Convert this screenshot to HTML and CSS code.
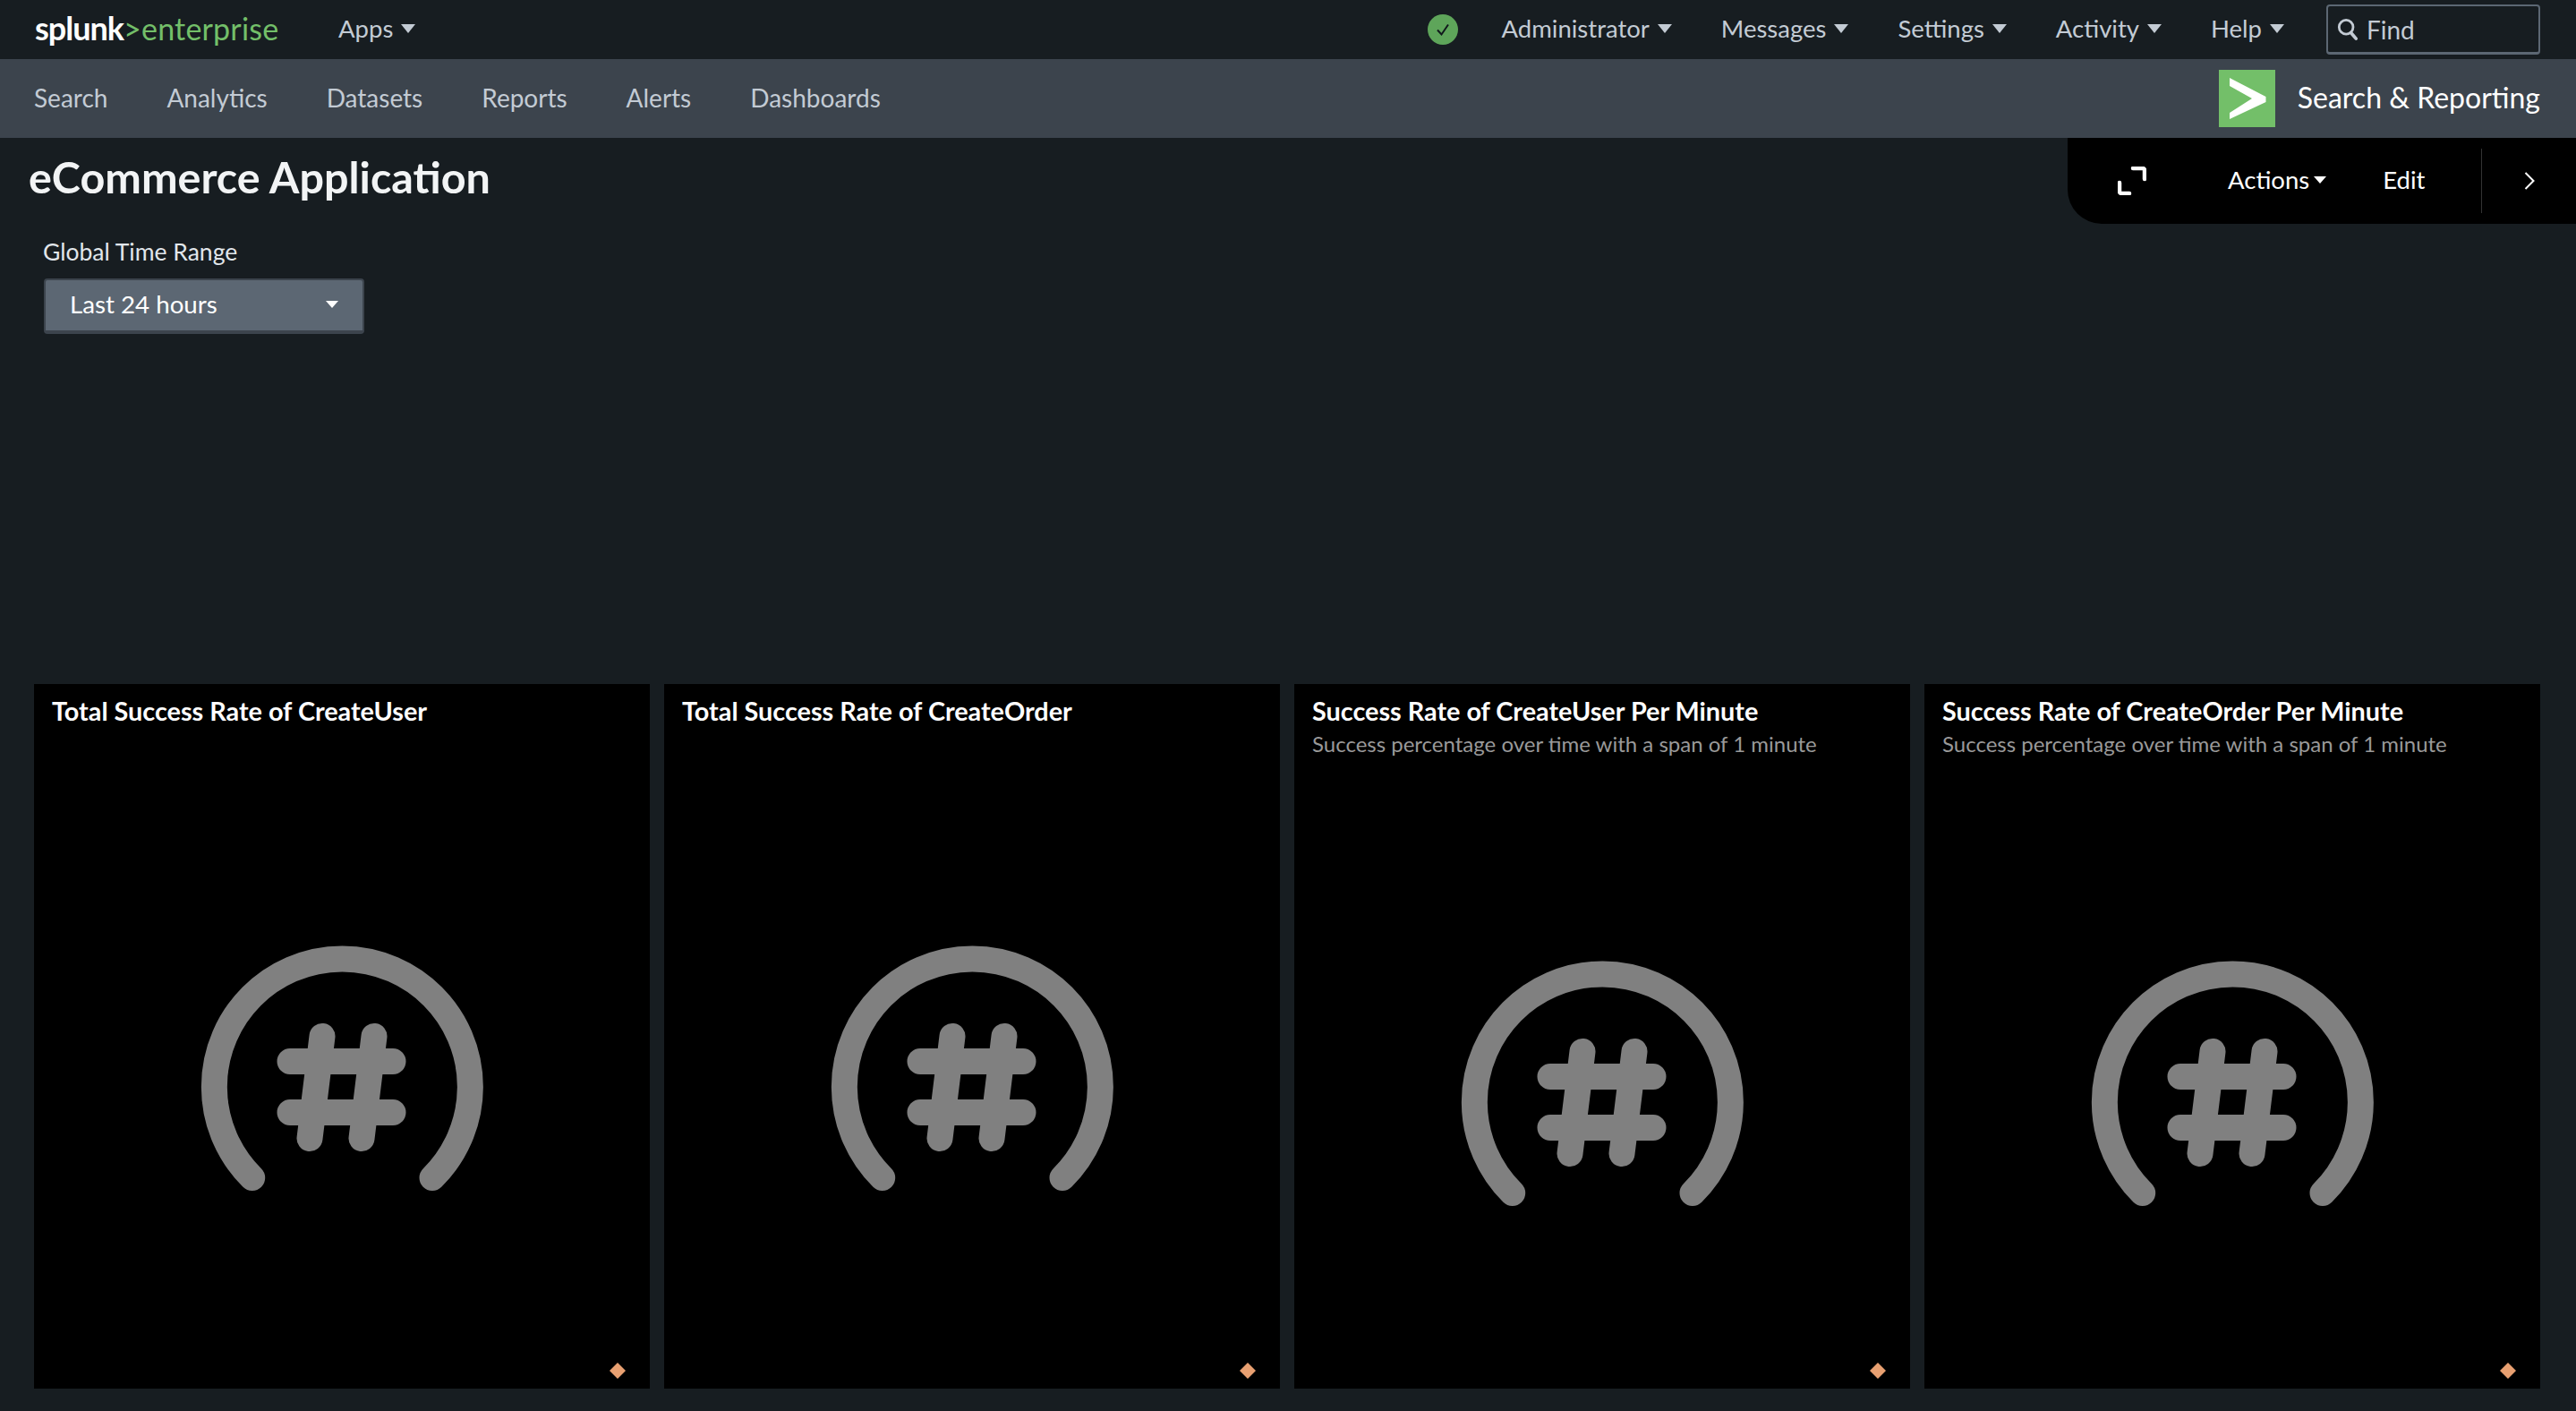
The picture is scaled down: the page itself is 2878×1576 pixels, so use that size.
FILE: index.html
```html
<!DOCTYPE html>
<html>
<head>
    <meta name="viewport" content="width=device-width, initial-scale=1.0" />
    <meta charset="UTF-8" />
    <title>eCommerce Application</title>
    <link rel="stylesheet" href="styles.css">
</head>
<body>
    <svg class="defs" width="0" height="0">
        <symbol id="gauge" viewBox="0 0 400 400">
            <g fill="none" stroke="#808080" stroke-width="29" stroke-linecap="round">
                <path d="M99.7 334.5A143 143 0 1 1 301 334.5"/>
                <path d="M142 204.5H257M142 261.5H257M178 176.5L164 290.5M236 176.5L222 290.5"/>
            </g>
        </symbol>
    </svg>
    <header class="topbar">
        <div class="logo"><span class="logo-white">splunk</span><span class="logo-green">&gt;enterprise</span></div>
        <a class="top-item apps">Apps<i class="caret"></i></a>
        <div class="top-right">
            <svg class="status" width="34" height="34" viewBox="0 0 34 34">
                <circle cx="17" cy="17" r="17" fill="#5ea55a"/>
                <path d="M11 17.5L15.5 22.5L23 11.5" fill="none" stroke="#10181c" stroke-width="2"/>
            </svg>
            <a class="top-item admin">Administrator<i class="caret"></i></a>
            <a class="top-item">Messages<i class="caret"></i></a>
            <a class="top-item">Settings<i class="caret"></i></a>
            <a class="top-item">Activity<i class="caret"></i></a>
            <a class="top-item">Help<i class="caret"></i></a>
            <div class="find">
                <svg width="24" height="28" viewBox="0 0 26 28">
                    <circle cx="11" cy="11" r="8.5" fill="none" stroke="#c3cbd4" stroke-width="3"/>
                    <path d="M17 18L23 25" stroke="#c3cbd4" stroke-width="4" stroke-linecap="round"/>
                </svg>
                <span>Find</span>
            </div>
        </div>
    </header>
    <nav class="appbar">
        <a>Search</a>
        <a>Analytics</a>
        <a>Datasets</a>
        <a>Reports</a>
        <a>Alerts</a>
        <a>Dashboards</a>
        <div class="app-name">
            <svg width="63" height="64" viewBox="0 0 63 64">
                <rect width="63" height="64" fill="#73bf69"/>
                <polygon points="12,9 52.5,30 52.5,36 12,55 12,48 37,32 12,18" fill="#fff"/>
            </svg>
            <span>Search &amp; Reporting</span>
        </div>
    </nav>
    <main class="content">
        <div class="actions">
            <svg class="expand" width="32" height="32" viewBox="0 0 32 32">
                <path d="M17 2H28A2 2 0 0 1 30 4V14M2 18V28A2 2 0 0 0 4 30H13" fill="none" stroke="#fff" stroke-width="4.5" stroke-linecap="round"/>
            </svg>
            <a class="act-menu">Actions<i class="caret small"></i></a>
            <a class="act-edit">Edit</a>
            <span class="divider"></span>
            <svg class="chev" width="12" height="20" viewBox="0 0 12 20">
                <path d="M1.5 1L10.5 10L1.5 19" fill="none" stroke="#fff" stroke-width="2"/>
            </svg>
        </div>
        <h1>eCommerce Application</h1>
        <div class="time-input">
            <label>Global Time Range</label>
            <button type="button" class="time-btn"><span>Last 24 hours</span><i class="caret small"></i></button>
        </div>
        <section class="panels">
            <div class="panel">
                <h3>Total Success Rate of CreateUser</h3>
                <div class="viz"><svg class="gauge"><use href="#gauge"/></svg></div>
                <i class="diamond"></i>
            </div>
            <div class="panel">
                <h3>Total Success Rate of CreateOrder</h3>
                <div class="viz"><svg class="gauge"><use href="#gauge"/></svg></div>
                <i class="diamond"></i>
            </div>
            <div class="panel">
                <h3>Success Rate of CreateUser Per Minute</h3>
                <p>Success percentage over time with a span of 1 minute</p>
                <div class="viz"><svg class="gauge"><use href="#gauge"/></svg></div>
                <i class="diamond"></i>
            </div>
            <div class="panel">
                <h3>Success Rate of CreateOrder Per Minute</h3>
                <p>Success percentage over time with a span of 1 minute</p>
                <div class="viz"><svg class="gauge"><use href="#gauge"/></svg></div>
                <i class="diamond"></i>
            </div>
        </section>
    </main>
</body>
</html>
```

FILE: styles.css
```css
* {
    box-sizing: border-box;
}
html, body {
    height: 100%;
}
body {
    margin: 0;
    display: flex;
    flex-direction: column;
    background-color: #171d21;
    color: #fff;
    font-family: Lato, "Liberation Sans", sans-serif;
}
a {
    text-decoration: none;
}
.defs {
    position: absolute;
}
.caret {
    display: inline-block;
    width: 0;
    height: 0;
    border-left: 8px solid transparent;
    border-right: 8px solid transparent;
    border-top: 10px solid currentColor;
}
.caret.small {
    border-left-width: 7px;
    border-right-width: 7px;
    border-top-width: 8px;
}

/* top bar */
.topbar {
    height: 66px;
    flex: none;
    display: flex;
    align-items: center;
    padding: 0 40px 3px 39px;
}
.logo {
    width: 339px;
    font-size: 36px;
    line-height: 58px;
}
.logo-white {
    color: #fff;
    font-weight: 700;
    letter-spacing: -1px;
}
.logo-green {
    color: #73bf69;
    font-weight: 400;
    font-size: 34px;
    letter-spacing: 0.2px;
}
.top-item {
    display: flex;
    align-items: center;
    gap: 9px;
    color: #c3cbd4;
    font-size: 27.5px;
    margin-left: 55px;
}
.apps {
    margin-left: 0;
}
.top-right {
    margin-left: auto;
    display: flex;
    align-items: center;
}
.status {
    margin-top: 3px;
}
.top-item.admin {
    margin-left: 48px;
}
.find {
    width: 239px;
    height: 56px;
    margin-left: 47px;
    margin-top: 3px;
    display: flex;
    align-items: center;
    gap: 9px;
    padding-left: 10px;
    border: 2px solid #5c6773;
    border-bottom-width: 3px;
    border-radius: 4px;
    color: #c3cbd4;
    font-size: 28px;
}

/* app bar */
.appbar {
    height: 88px;
    flex: none;
    display: flex;
    align-items: center;
    gap: 66px;
    padding: 0 40px 0 38px;
    background-color: #3c444d;
    font-size: 28px;
}
.appbar a {
    color: #c3cbd4;
    padding-bottom: 3px;
}
.app-name {
    margin-left: auto;
    display: flex;
    align-items: center;
    gap: 25px;
    font-size: 32px;
}
.app-name span {
    padding-bottom: 3px;
}

/* dashboard */
.content {
    position: relative;
    flex: 1;
    display: flex;
    flex-direction: column;
    padding: 13px 40px 25px 38px;
}
.actions {
    position: absolute;
    top: 0;
    right: 0;
    width: 568px;
    height: 96px;
    display: flex;
    align-items: center;
    background-color: #000;
    border-bottom-left-radius: 38px;
    font-size: 27.5px;
}
.expand {
    margin-left: 56px;
}
.act-menu {
    display: flex;
    align-items: center;
    gap: 5px;
    margin-left: 91px;
    padding-bottom: 3px;
    color: #fff;
}
.act-edit {
    margin-left: 63px;
    padding-bottom: 3px;
    color: #fff;
}
.divider {
    width: 1px;
    height: 72px;
    margin-left: 63px;
    background-color: #333;
}
.chev {
    margin-left: 47px;
}
h1 {
    margin: 0 0 0 -6px;
    font-size: 48.5px;
    line-height: 60px;
    font-weight: 700;
    color: #f2f4f5;
}
.time-input {
    margin: 39px 0 0 10px;
    display: flex;
    flex-direction: column;
    align-items: flex-start;
}
.time-input label {
    font-size: 26.5px;
    line-height: 30px;
    color: #e1e6eb;
}
.time-btn {
    width: 358px;
    height: 62px;
    margin: 15px 0 0 1px;
    display: flex;
    align-items: center;
    justify-content: space-between;
    padding: 0 27px 3px 27px;
    background-color: #5c6773;
    border: 2px solid #3c444d;
    border-bottom-width: 4px;
    border-radius: 4px;
    color: #fff;
    font-family: inherit;
    font-size: 27.7px;
}
.panels {
    margin-top: auto;
    height: 787px;
    display: grid;
    grid-template-columns: repeat(4, 688px);
    gap: 16px;
}
.panel {
    position: relative;
    display: flex;
    flex-direction: column;
    background-color: #000;
    padding-top: 14px;
}
.panel h3 {
    margin: 0;
    padding: 0 20px;
    font-size: 28.8px;
    line-height: 33px;
    font-weight: 700;
}
.panel p {
    margin: 3px 0 -3px;
    padding: 0 20px;
    font-size: 24px;
    line-height: 34px;
    color: #999;
}
.viz {
    flex: 1;
    display: flex;
    align-items: center;
    justify-content: center;
}
.gauge {
    width: 400px;
    height: 400px;
}
.diamond {
    position: absolute;
    right: 27px;
    bottom: 11px;
    width: 18px;
    height: 18px;
    background-color: #e8a071;
    clip-path: polygon(50% 0, 100% 50%, 50% 100%, 0 50%);
}
```
